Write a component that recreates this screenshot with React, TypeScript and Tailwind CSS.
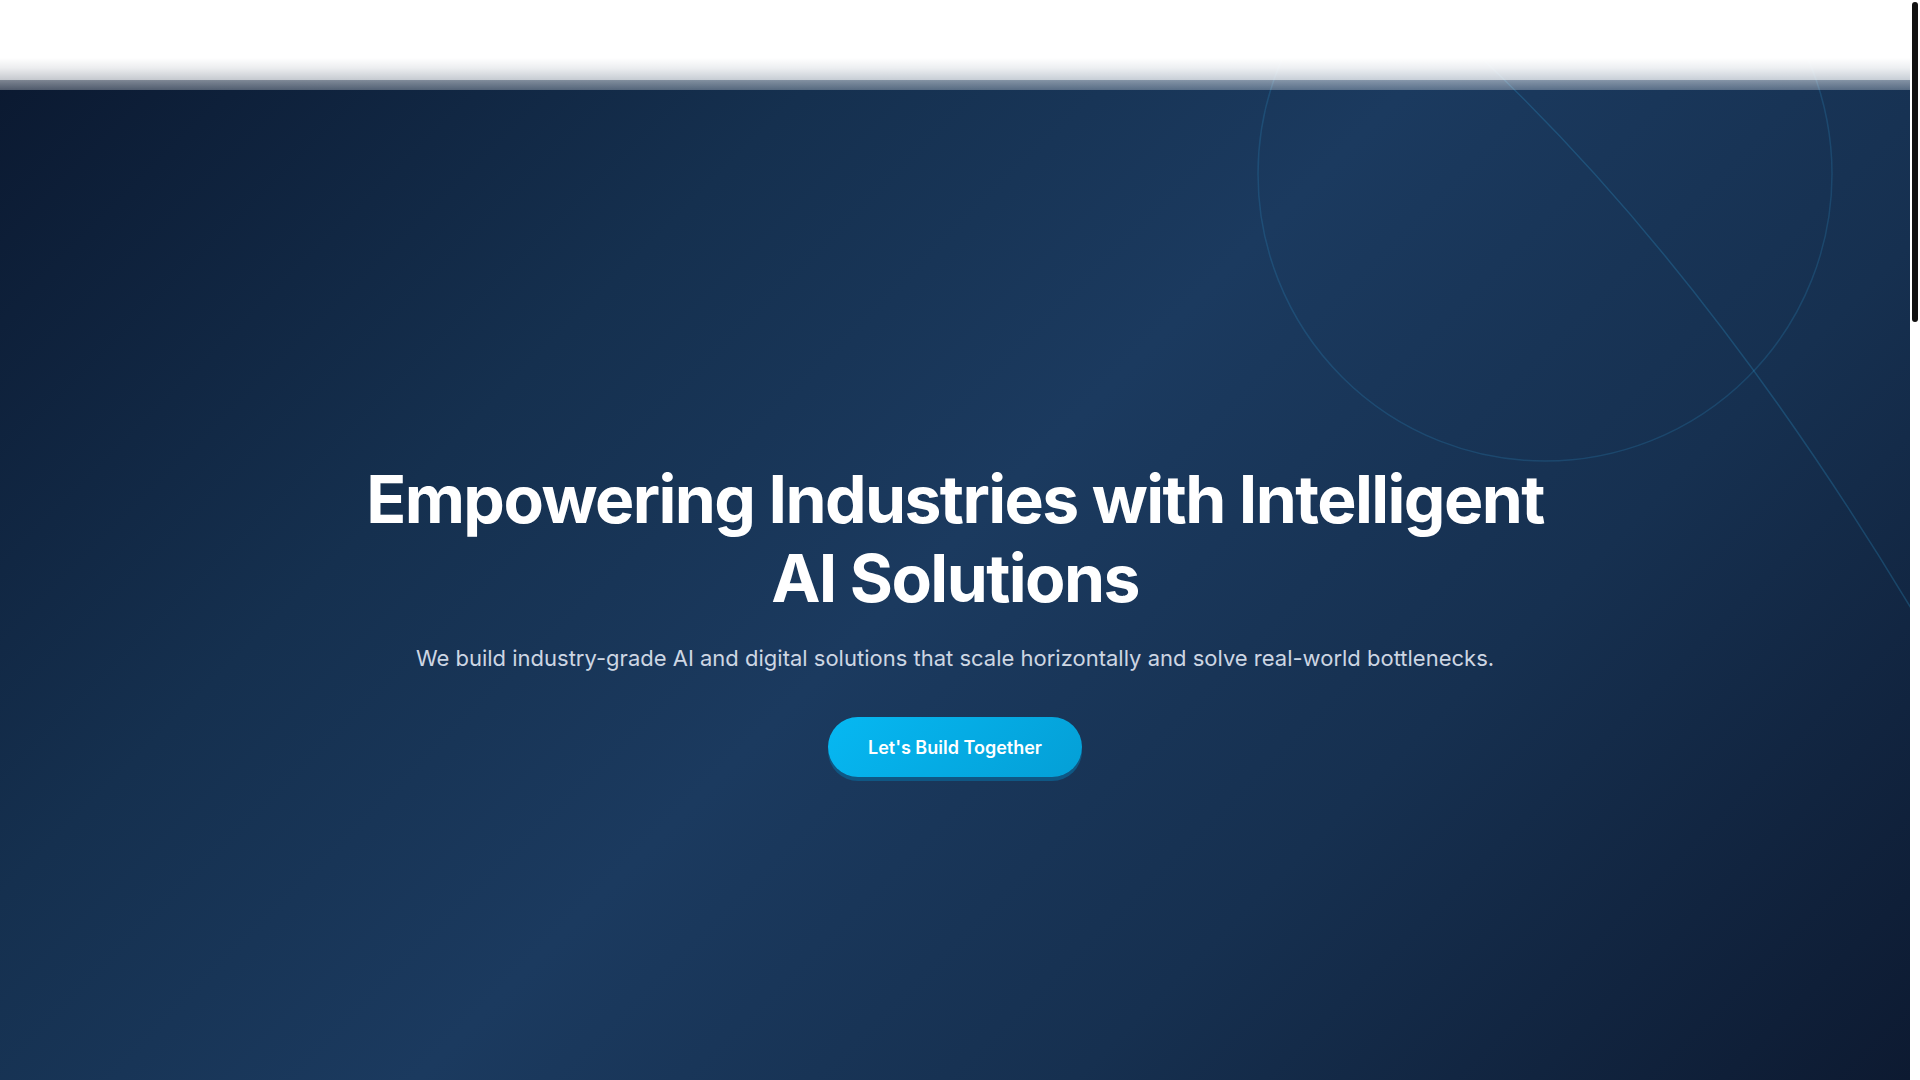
import React from "react";

export default function App() {
  return (
    <div className="flex h-screen w-full overflow-hidden bg-white font-['Inter','Noto_Sans',sans-serif]">
      <main className="relative min-w-0 flex-1">
        {/* Header (overlays the hero) */}
        <header className="absolute left-0 right-0 top-0 z-20 h-[90px] bg-[linear-gradient(to_bottom,rgba(255,255,255,1)_0px,rgba(255,255,255,1)_58px,rgba(255,255,255,0.92)_68px,rgba(255,255,255,0.76)_80px,rgba(255,255,255,0.47)_80px,rgba(255,255,255,0.28)_90px)]" />

        {/* Hero */}
        <section className="relative h-[1080px] overflow-hidden bg-[linear-gradient(135deg,#0a172e_0%,#15304f_30%,#1b3a5f_50%,#163050_72%,#0d1a31_100%)]">
          <svg
            className="pointer-events-none absolute inset-0 h-full w-full"
            viewBox="0 0 1910 1080"
            preserveAspectRatio="none"
          >
            <circle cx="1545" cy="174" r="287" fill="none" stroke="#38bdf8" strokeOpacity="0.16" strokeWidth="1.5" />
            <path d="M 1440 20 Q 1700 250 1930 640" fill="none" stroke="#38bdf8" strokeOpacity="0.2" strokeWidth="1.5" />
          </svg>

          <div className="relative z-10 flex flex-col items-center pt-[460px] text-center">
            <h1 className="text-[66px] font-bold leading-[1.2] tracking-[-0.024em] text-white">
              Empowering Industries with Intelligent
              <br />
              AI Solutions
            </h1>
            <p className="mt-[24px] text-[22px] leading-[32px] text-[#cdd6e3]">
              We build industry-grade AI and digital solutions that scale horizontally and solve real-world bottlenecks.
            </p>
            <button className="mt-[43px] h-[60px] w-[254px] rounded-full bg-[linear-gradient(135deg,#06b8f2_0%,#049fd6_100%)] text-[18px] font-semibold text-white shadow-[0_4px_0_#0f5784]">
              Let's Build Together
            </button>
          </div>
        </section>

        <section className="h-[2520px] bg-white" />
      </main>

      {/* Scrollbar track */}
      <aside className="w-[10px] shrink-0 bg-white">
        <div className="ml-[2px] mt-[2px] h-[320px] w-[6px] rounded-full bg-[#111111]" />
      </aside>
    </div>
  );
}
